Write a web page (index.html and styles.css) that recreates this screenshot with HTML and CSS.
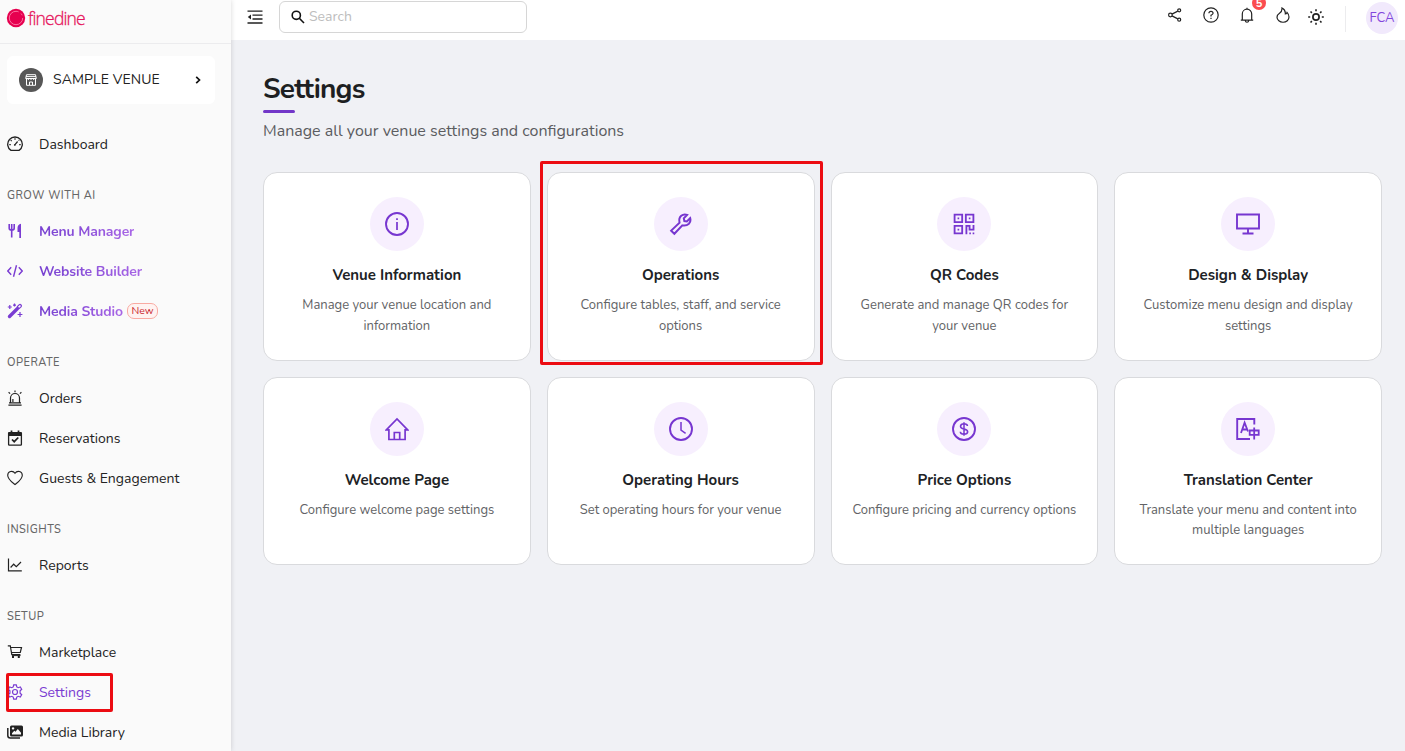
FILE: index.html
```html
<!DOCTYPE html>
<html lang="en">
<head>
<meta charset="utf-8">
<title>Settings</title>
<link rel="stylesheet" href="styles.css">
</head>
<body>
<div class="app">
  <aside class="sidebar">
    <div class="brand">
      <svg width="20" height="20" viewBox="0 0 20 20"><circle cx="10" cy="10" r="9.2" fill="#e6004f"/><circle cx="10" cy="10" r="6.700" fill="none" stroke="#ff8db2" stroke-width=".8" stroke-dasharray="34 3 2 3"/></svg>
      <span class="brand-name">finedine</span>
    </div>
    <div class="venue">
      <span class="venue-icon"><svg width="12" height="12" viewBox="0 0 12 12" fill="none" stroke="#fff"><path d="M1.500.7h9L11.300 4.500H.7zM1 2.600h10M1.500 4.500v6.800h9V4.500M4.500 11V8h3v3M3.300 4.500v1.500M6 4.500v1.500M8.700 4.500v1.500"/></svg></span>
      <span class="venue-name">SAMPLE VENUE</span>
      <svg class="venue-arrow" width="8" height="8" viewBox="0 0 8 8" fill="none" stroke="#111" stroke-width="1.7"><path d="M2.200.8L5.500 4L2.200 7.200"/></svg>
    </div>
    <nav class="nav">
      <a class="item"><svg class="ico" viewBox="0 0 16 16"><path d="M4 14.400A7.300 7.300 0 1 1 12 14.400Z"/><path d="M8 8.700L10.600 5.500M8 2.200v1.600M3.700 4.200l1 1M2.300 8.600h1.500M12.200 8.600h1.500M11.600 4.700l.6-.6" stroke-width="1.200"/><circle cx="7.800" cy="8.900" r=".9" fill="currentColor" stroke="none"/></svg><span>Dashboard</span></a>
      <div class="section">GROW WITH AI</div>
      <a class="item ai"><svg class="ico" viewBox="0 0 16 16"><path d="M2.200 1v4.200Q2.200 7 4.700 7T7.200 5.200V1M4.700 1v13.500" stroke-width="1.600"/><path d="M14 .8Q10.500 1.500 10.500 5v4h1.800v6H14z" fill="currentColor" stroke="none"/></svg><span>Menu Manager</span></a>
      <a class="item ai"><svg class="ico" viewBox="0 0 16 16"><path d="M4.200 4.200L.8 8l3.400 3.800M11.800 4.200L15.200 8l-3.400 3.800M9.500 2.200L6.500 13.800" stroke-width="1.400"/></svg><span>Website Builder</span></a>
      <a class="item ai"><svg class="ico" viewBox="0 0 16 16"><path d="M2.500 13.500L10.500 5.500" stroke-width="3.400" stroke-linecap="round"/><path d="M10 4L12.300 1.700Q13.200 1.100 14 2T14.200 3.600L11.800 5.900M2.800 2v4M.8 4h4M7.500.6v3M6 2.100h3M13 9v5M10.600 11.500h4.800" stroke-width="1.200"/></svg><span>Media Studio</span><em class="tag">New</em></a>
      <div class="section">OPERATE</div>
      <a class="item"><svg class="ico" viewBox="0 0 16 16"><path d="M3.500 12.800V8a4.500 4.500 0 0 1 9 0v4.800M2 12.800h12M5.900 12V9M1.400 15.200h13.200M8 .4v1.800M1.600 2.300l1.500 1.300M14.400 2.300l-1.500 1.300" stroke-width="1.200"/></svg><span>Orders</span></a>
      <a class="item"><svg class="ico" viewBox="0 0 16 16"><rect x="1.600" y="2.600" width="12.800" height="12.600" rx=".7"/><path d="M1.500 4.200h13" stroke-width="3.600"/><path d="M4.500.4v3M11.500.4v3M5 9.500l2.200 2.200L11.300 7.500" stroke-width="1.700"/></svg><span>Reservations</span></a>
      <a class="item"><svg class="ico" viewBox="0 0 16 16"><path d="M8 14.600C4.800 12 .7 9.200.7 5.200C.7 1 6 .1 8 3.300C10 .1 15.300 1 15.300 5.200C15.300 9.200 11.200 12 8 14.600Z" stroke-width="1.100"/></svg><span>Guests &amp; Engagement</span></a>
      <div class="section">INSIGHTS</div>
      <a class="item"><svg class="ico" viewBox="0 0 16 16"><path d="M1.500 1.500v12.300h13.300M3.600 10.500L6.700 7.200L9.300 9.600L14 5" stroke-width="1.200"/></svg><span>Reports</span></a>
      <div class="section">SETUP</div>
      <a class="item"><svg class="ico" viewBox="0 0 16 16"><path d="M.8 1.900h2.500l1.500 8.700h8.600M3.600 3.500h10.900l-1.200 5H4.500" stroke-width="1.200"/><path d="M5 11.600h8.500" stroke-width="1"/><path d="M6 12v2M11.800 12v2" stroke-width="2"/></svg><span>Marketplace</span></a>
      <a class="item active"><svg class="ico" viewBox="0 0 16 16"><path d="M6.700.8h2.600l.5 2.100 1.400.8 2.100-.7 1.400 2.300-1.600 1.500v2.400l1.600 1.500-1.400 2.300-2.100-.7-1.400.8-.5 2.100H6.700l-.5-2.100-1.400-.8-2.100.7-1.400-2.300 1.600-1.500V6.800L1.300 5.300 2.700 3l2.100.7 1.400-.8z" stroke-width="1.200"/><circle cx="8" cy="8" r="2.500" stroke-width="1.200"/></svg><span>Settings</span><i class="mark mark-nav"></i></a>
      <a class="item"><svg class="ico" viewBox="0 0 16 16"><path d="M.8 4v7.500Q.8 14 3.300 14H13" stroke-width="1.500"/><path fill="currentColor" stroke="none" fill-rule="evenodd" d="M4.500 1.500h10a1.500 1.500 0 0 1 1.500 1.500v8a1.500 1.500 0 0 1-1.500 1.500h-10A1.500 1.500 0 0 1 3 11V3a1.500 1.500 0 0 1 1.500-1.500zM5 10.500h9V8.700L10.800 5 8.500 7.800 7.300 6.700 5 9.300zM6 3.200a1.200 1.200 0 1 0 .1 0z"/></svg><span>Media Library</span></a>
    </nav>
  </aside>
  <div class="content">
    <header class="topbar">
      <svg class="fold" width="16" height="16" viewBox="0 0 16 16" fill="none" stroke="#222" stroke-width="1.300"><path d="M.5 2.200h15M5.500 6.200h10M5.500 10h10M.5 14h15"/><path d="M.8 8L4 5.500v5z" fill="#222" stroke="none"/></svg>
      <label class="search"><svg width="14" height="14" viewBox="0 0 14 14" fill="none" stroke="#111" stroke-width="1.600"><circle cx="5.300" cy="5.300" r="4.100"/><path d="M8.300 8.300L13 13"/></svg><span>Search</span></label>
      <div class="actions">
        <svg class="act" viewBox="0 0 16 16"><circle cx="3.400" cy="8" r="1.800"/><circle cx="12.200" cy="3.300" r="1.500"/><circle cx="12.200" cy="12.700" r="1.500"/><path d="M5 7.100l5.800-3M5 8.900l5.800 3"/></svg>
        <svg class="act" viewBox="0 0 16 16"><circle cx="8" cy="8" r="7.200"/><path d="M5.900 6.300Q6 4.300 8 4.300T10.100 6.300Q10 7.400 8 8.200V9.500M8 10.700v1.200"/></svg>
        <span class="bell"><svg class="act" viewBox="0 0 16 16"><path d="M1.800 13.100h12.400M3.300 13V6.900a4.700 4.700 0 0 1 9.400 0V13M8 .8v1.500M6.200 13.500Q6.500 15.200 8 15.200T9.800 13.500"/></svg><b class="badge">5</b></span>
        <svg class="act" viewBox="0 0 16 16"><path d="M7 1Q7.200 4.500 4.500 6.300Q2 8 2 10.200A5.800 5 0 0 0 14 10Q14 7.500 12 5.400Q11.300 7 10.300 7Q10.800 3 7 1Z"/></svg>
        <svg class="act sun" viewBox="0 0 16 16"><circle cx="8" cy="8" r="3.100" stroke-width="1.700"/><path d="M8 .2v2M8 13.800v2M.2 8h2M13.800 8h2M2.500 2.500l1.400 1.400M12.100 12.100l1.400 1.400M2.500 13.500l1.400-1.400M12.100 3.900l1.400-1.400" stroke-width="1.600"/></svg>
        <i class="divider"></i>
        <span class="avatar">FCA</span>
      </div>
    </header>
    <main class="page">
      <h1>Settings</h1>
      <div class="rule"></div>
      <p class="lead">Manage all your venue settings and configurations</p>
      <div class="grid">
        <section class="card"><span class="disc"><svg viewBox="0 0 24 24"><circle cx="12" cy="12" r="11"/><path d="M12 10v8M12 6.200v1.800" stroke-width="1.700"/></svg></span><h2>Venue Information</h2><p>Manage your venue location and information</p></section>
        <section class="card"><span class="disc"><svg viewBox="-.5 -.8 25.500 25.500"><path d="M1.800 19L10.700 10.500Q9.500 6 12.500 3.300Q15.300.8 18.800 2.300L15.200 6L15.800 8.800L18.500 9.300L22 5.700Q23 9 20.700 11.600Q18 14.200 13.700 13.400L5.200 22.300Z" stroke-width="2.100"/></svg></span><h2>Operations</h2><p>Configure tables, staff, and service options</p><i class="mark mark-card"></i></section>
        <section class="card"><span class="disc"><svg viewBox="-.5 -.5 25 25"><path d="M2.200 2.200h7.900v7.900H2.200zM13.900 2.200h7.900v7.900h-7.900zM2.200 13.900h7.900v7.900H2.200z" stroke-width="1.900"/><path d="M14.500 22.700V13.900h3.300v3.900h4.100v-4.800" stroke-width="1.900"/><path d="M5.300 6.100H7M17 6.100h1.700M5.300 17.800H7M17.500 21.700h1.700M21 21.700h1.700" stroke-width="1.700"/></svg></span><h2>QR Codes</h2><p>Generate and manage QR codes for your venue</p></section>
        <section class="card"><span class="disc"><svg viewBox="0 0 24 24"><path d="M1 2.500h22v14H1zM12 16.500v5M6.500 21.500h11"/></svg></span><h2>Design &amp; Display</h2><p>Customize menu design and display settings</p></section>
        <section class="card"><span class="disc"><svg viewBox="0 0 24 24"><path d="M3.900 22.500V12.800H1.300L12 2L22.700 12.800H20.100V22.500zM9.300 22.500v-7h5.400v7" stroke-width="1.700"/></svg></span><h2>Welcome Page</h2><p>Configure welcome page settings</p></section>
        <section class="card"><span class="disc"><svg viewBox="0 0 24 24"><circle cx="12" cy="12" r="11"/><path d="M12 5v8.200l4.600 3.100" stroke-width="1.500"/></svg></span><h2>Operating Hours</h2><p>Set operating hours for your venue</p></section>
        <section class="card"><span class="disc"><svg viewBox="0 0 24 24"><circle cx="12" cy="12" r="11"/><path d="M15.500 9Q15.200 6.800 12 6.800T8.500 9.200Q8.500 11.300 12 11.900T15.700 14.900Q15.500 17.200 12 17.200T8.300 14.700M12 5.200v13.600" stroke-width="1.500"/></svg></span><h2>Price Options</h2><p>Configure pricing and currency options</p></section>
        <section class="card"><span class="disc"><svg viewBox="0 0 24 24"><path d="M18.300 7.500V2H1.200v20H14"/><path d="M5 16L8.600 5.700L12 14.500M6.300 12.500h5" stroke-width="1.800"/><path d="M13.700 13.500h9v4.300h-9zM18.200 10.500v12" stroke-width="1.800"/></svg></span><h2>Translation Center</h2><p>Translate your menu and content into multiple languages</p></section>
      </div>
    </main>
  </div>
</div>
</body>
</html>
```
FILE: styles.css
```css
* { box-sizing: border-box; }
body { margin: 0; font-family: Nunito, Lato, "Open Sans", sans-serif; color: #222; background: #f0f1f5; }
svg { flex: none; display: block; }
.app { display: flex; height: 751px; overflow: hidden; }
.sidebar { width: 231px; flex: none; background: #fafafa; box-shadow: 0 0 5px rgba(0,0,0,.16); z-index: 1; }
.brand { height: 44px; border-bottom: 1px solid #ececee; padding: 0 0 7px 6px; display: flex; align-items: center; gap: 2px; }
.brand-name { font: 300 17.5px/20px "Open Sans", sans-serif; color: #e6145c; letter-spacing: -.82px; -webkit-text-stroke: .3px #e6145c; }
.venue { margin: 12px 16px 20px 7px; height: 48px; background: #fff; border-radius: 6px; display: flex; align-items: center; padding: 0 13px 0 12px; }
.venue-icon { width: 24px; height: 24px; border-radius: 50%; background: #575757; display: flex; align-items: center; justify-content: center; margin-right: 10px; }
.venue-name { font-size: 14px; letter-spacing: .1px; flex: 1; padding-bottom: 2px; }
.item { position: relative; height: 40px; padding-left: 7px; display: flex; align-items: center; font-size: 14px; }
.ico { width: 16px; height: 16px; margin-right: 16px; fill: none; stroke: currentColor; stroke-width: 1.3; }
.section { height: 47px; padding: 24px 0 0 7px; font-size: 11px; line-height: 16px; font-weight: 500; letter-spacing: .5px; color: #666; }
.ai { font-weight: 700; color: #7a3cd2; letter-spacing: -.13px; }
.ai > span { background: linear-gradient(90deg, #7640d0, #a866e6); -webkit-background-clip: text; background-clip: text; color: transparent; }
.tag { font: 400 10.5px/14px Nunito, Lato, sans-serif; letter-spacing: 0; color: #c9252d; border: 1px solid #f9aaa2; background: #fff3f1; border-radius: 7px; padding: 0 3.500px; margin-left: 4px; }
.active { color: #7a3cd2; }
.mark { position: absolute; border: 3px solid #ec0c12; border-radius: 2px; }
.mark-nav { left: 6px; top: 1px; width: 107px; height: 39px; }
.content { flex: 1; min-width: 0; }
.topbar { height: 40px; background: #fff; display: flex; align-items: flex-start; padding: 0 7px 0 16px; }
.fold { margin-top: 9px; }
.search { margin: 1px 0 0 16px; width: 248px; height: 32px; border: 1px solid #d6d6d6; border-radius: 6px; display: flex; align-items: center; gap: 4px; padding-left: 11px; font-size: 14px; color: #bdbdbd; }
.search span { padding-bottom: 2px; }
.actions { margin-left: auto; display: flex; align-items: flex-start; gap: 20px; }
.act { width: 16px; height: 16px; margin-top: 7px; fill: none; stroke: #222; stroke-width: 1.2; }
.sun { margin-left: -3px; margin-top: 9px; }
.bell { position: relative; }
.badge { position: absolute; left: 13px; top: -4px; width: 14px; height: 14px; border-radius: 50%; background: #fb4c50; color: #fff; font-size: 11px; line-height: 15px; text-align: center; }
.divider { width: 1px; height: 26px; margin: 6px 0 0 1px; background: #ececee; }
.avatar { width: 32px; height: 32px; margin: 2px 0 0; border-radius: 50%; background: #f1e9fc; color: #8246dc; font-size: 13px; line-height: 32px; text-align: center; }
.page { padding: 33px 23px 0 32px; }
h1 { margin: 0; font-size: 28px; line-height: 32px; letter-spacing: -.8px; font-weight: 700; color: #1d1f22; }
.rule { width: 32px; height: 3px; margin: 5px 0 8px; border-radius: 2px; background: #7237c8; }
.lead { margin: 0; font-size: 16px; line-height: 20px; color: #5b5c5f; }
.grid { margin-top: 31px; display: grid; grid-template-columns: repeat(4, 1fr); grid-auto-rows: 188.5px; gap: 16px; }
.card { position: relative; background: #fff; border: 1px solid #d9dadd; border-radius: 14px; padding: 24px 16px; text-align: center; }
.disc { width: 54px; height: 54px; margin: 0 auto; border-radius: 50%; background: #f7effe; display: flex; align-items: center; justify-content: center; }
.disc svg { width: 24px; height: 24px; fill: none; stroke: #7736d0; stroke-width: 1.9; }
.card h2 { margin: 14px 0 10px; font-size: 15px; line-height: 20px; font-weight: 700; color: #202225; }
.card p { margin: 0; font-size: 13px; line-height: 20.5px; color: #626366; }
.mark-card { left: -8px; top: -12px; width: 283px; height: 204px; }
```
